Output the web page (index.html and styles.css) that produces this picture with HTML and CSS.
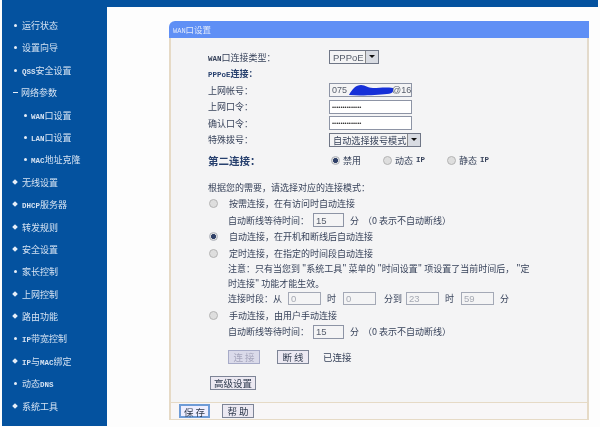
FILE: index.html
```html
<!DOCTYPE html>
<html lang="zh">
<head>
<meta charset="utf-8">
<title>WAN口设置</title>
<link rel="stylesheet" href="styles.css">
</head>
<body>
<div class="page">
  <div class="topbar"></div>
  <div class="columns">
    <nav class="sidebar">
      <div class="item dot">运行状态</div>
      <div class="item dot">设置向导</div>
      <div class="item dot"><span class="lat">QSS</span>安全设置</div>
      <div class="item dash">网络参数</div>
      <div class="item sub dot"><span class="lat">WAN</span>口设置</div>
      <div class="item sub dot"><span class="lat">LAN</span>口设置</div>
      <div class="item sub dot"><span class="lat">MAC</span>地址克隆</div>
      <div class="item plus">无线设置</div>
      <div class="item plus"><span class="lat">DHCP</span>服务器</div>
      <div class="item plus">转发规则</div>
      <div class="item plus">安全设置</div>
      <div class="item dot">家长控制</div>
      <div class="item plus">上网控制</div>
      <div class="item plus">路由功能</div>
      <div class="item dot"><span class="lat">IP</span>带宽控制</div>
      <div class="item plus"><span class="lat">IP</span>与<span class="lat">MAC</span>绑定</div>
      <div class="item dot">动态<span class="lat">DNS</span></div>
      <div class="item plus">系统工具</div>
    </nav>
    <main class="main">
      <section class="panel">
        <header class="panel-head"><span class="lat">WAN</span>口设置</header>
        <div class="panel-body">
          <div class="row"><span class="label"><span class="lat">WAN</span>口连接类型：</span>
            <span class="select select-type"><span class="select-value">PPPoE</span><span class="arrow"></span></span></div>
          <div class="row"><span class="label strong-small"><span class="lat">PPPoE</span>连接：</span></div>
          <div class="row"><span class="label">上网帐号：</span>
            <span class="field-wrap"><input class="input account acct-name" value="075                  @16">
              <svg class="scribble" width="44" height="12" viewBox="0 0 44 12"><path d="M0 11C3 5 7 1 12 1c5 0 6 3 12 3 7 0 12-1 20 0 1 4-1 6-6 6-10 1-26 2-38 1z" fill="#1630d8"/></svg></span></div>
          <div class="row"><span class="label">上网口令：</span><input class="input account pw" type="password" value="11111111111111"></div>
          <div class="row"><span class="label">确认口令：</span><input class="input account pw" type="password" value="11111111111111"></div>
          <div class="row"><span class="label">特殊拨号：</span>
            <span class="select select-dial"><span class="select-value cjk">自动选择拨号模式</span><span class="arrow"></span></span></div>
          <div class="row second"><span class="label strong">第二连接：</span>
            <span class="radio-opt first"><span class="radio on"></span>禁用</span>
            <span class="radio-opt opt-b"><span class="radio"></span>动态 <span class="lat">IP</span></span>
            <span class="radio-opt opt-c"><span class="radio"></span>静态 <span class="lat">IP</span></span></div>

          <div class="row intro">根据您的需要，请选择对应的连接模式：</div>
          <div class="row mode"><span class="radio"></span>按需连接，在有访问时自动连接</div>
          <div class="row indent">自动断线等待时间：<input class="input wait" value="15"><span class="unit">分</span><span class="hint">（0 表示不自动断线）</span></div>
          <div class="row mode"><span class="radio on"></span>自动连接，在开机和断线后自动连接</div>
          <div class="row mode"><span class="radio"></span>定时连接，在指定的时间段自动连接</div>
          <div class="row indent tight">注意：只有当您到 "系统工具" 菜单的 "时间设置" 项设置了当前时间后， "定</div>
          <div class="row indent tight">时连接" 功能才能生效。</div>
          <div class="row indent period">连接时段：从<input class="input time t1" value="0"><span class="sep">时</span><input class="input time" value="0"><span class="sep sep-to">分到</span><input class="input time" value="23"><span class="sep">时</span><input class="input time" value="59"><span class="sep">分</span></div>
          <div class="row mode"><span class="radio"></span>手动连接，由用户手动连接</div>
          <div class="row indent">自动断线等待时间：<input class="input wait" value="15"><span class="unit">分</span><span class="hint">（0 表示不自动断线）</span></div>
          <div class="actions">
            <button class="btn off">连 接</button>
            <button class="btn">断 线</button>
            <span class="status">已连接</span>
          </div>
          <div class="advanced"><button class="btn wide">高级设置</button></div>
        </div>
        <footer class="panel-foot">
          <button class="btn focus">保 存</button>
          <button class="btn">帮 助</button>
        </footer>
      </section>
    </main>
  </div>
</div>
</body>
</html>
```
FILE: styles.css
```css
* { box-sizing: border-box; }
html, body { margin: 0; padding: 0; background: #fff; }
.page {
  width: 600px; height: 427px; overflow: hidden; background: #fdfdfd;
  padding-left: 2px;
  font-family: "Noto Sans CJK SC", "Liberation Sans", sans-serif;
  font-size: 9px; color: #37425a;
  filter: blur(0.4px);
}
.lat { font-family: "Liberation Mono", monospace; font-size: 7.5px; font-weight: 700; }
.topbar { width: 596px; height: 7px; background: #04529f; }
.columns { display: flex; height: 419px; }

.sidebar { width: 105px; height: 419px; background: #04529f; padding-top: 8px; color: #d5e2f2; flex: none; }
.item { height: 22.4px; line-height: 22.4px; padding-left: 20px; position: relative; white-space: nowrap; }
.item.sub { padding-left: 29px; }
.item.dash { padding-left: 19px; }
.item::before { content: ""; position: absolute; background: #e6eef8; }
.dot::before { left: 12px; top: 9px; width: 3px; height: 3px; border-radius: 50%; }
.sub.dot::before { left: 22px; }
.plus::before { left: 11px; top: 8px; width: 4px; height: 4px; transform: rotate(45deg); }
.dash::before { left: 11px; top: 10px; width: 5px; height: 1px; }

.main { flex: 1; padding: 14px 0 0 62px; }
.panel { width: 420px; height: 399px; display: flex; flex-direction: column; }
.panel-head {
  height: 17px; line-height: 17px; background: #5f8ff5; color: #dfe8fb;
  border-radius: 6px 0 0 0; padding-left: 4px; font-size: 8.5px; flex: none;
}
.panel-head .lat { font-size: 7px; font-weight: 400; }
.panel-body {
  height: 364px; flex: none; background: #f4f4f5; padding: 10.75px 0 0 37px;
  border-left: 2px solid #e6dac6; border-right: 2px solid #e3dacb;
}
.panel-foot {
  flex: 1; background: #f8f6f7; display: flex; align-items: center; gap: 12px;
  padding: 0 0 0 8px;
  border: 2px solid #e6dac6; border-width: 1px 2px 1px 2px;
}

.row { height: 16.5px; display: flex; align-items: center; white-space: nowrap; }
.label { width: 121px; flex: none; }
.strong { font-size: 10.5px; font-weight: 700; color: #27406e; }
.strong-small { font-weight: 700; color: #27406e; }
.strong-small .lat { color: #27406e; }
.second { margin-top: 4px; }
.intro { margin-top: 10.5px; }

.input {
  height: 14px; padding: 0 2px; margin: 0; border: 1px solid #8d94a5; background: #fff;
  font-family: "Liberation Sans", sans-serif; font-size: 9.5px; color: #59606e; outline: none;
  border-radius: 0;
}
.account { width: 83px; }
.acct-name { font-size: 9px; padding-right: 0; }
.pw { font-size: 6px; letter-spacing: 0; color: #333; }
.field-wrap { position: relative; display: flex; }
.scribble { position: absolute; left: 20px; top: 1px; }
.field-wrap .input { background: #f4f4f5; }

.select {
  height: 14px; display: flex; align-items: center; justify-content: space-between;
  border: 1px solid #6f7686; background: #f4f4f5; color: #555c6a;
  font-family: "Liberation Sans", sans-serif; font-size: 9.5px; padding-left: 3px;
}
.select-type { width: 50px; }
.select-dial { width: 92px; }
.select-value.cjk { font-family: "Noto Sans CJK SC", sans-serif; font-size: 9.2px; color: #37425a; }
.arrow {
  width: 13px; height: 12px; background: #d8dbe2; border-left: 1px solid #888; position: relative; flex: none;
}
.arrow::after {
  content: ""; position: absolute; left: 3px; top: 4px;
  border: 3px solid transparent; border-top: 3px solid #111; border-bottom: 0;
}

.radio {
  width: 9px; height: 9px; border-radius: 50%; display: inline-block; flex: none;
  background: #dedede; border: 1px solid #b4b4b4;
}
.radio.on { background: radial-gradient(circle, #2f4068 0 2.2px, #dedede 2.8px); border-color: #aeb2ba; }
.radio-opt { display: inline-flex; align-items: center; gap: 3px; }
.radio-opt.first { margin-left: 2px; }
.opt-b { margin-left: 22px; }
.opt-c { margin-left: 22px; }

.mode { padding-left: 1px; }
.mode .radio { margin-left: 0; margin-right: 11px; }
.indent { padding-left: 20px; }
.tight { height: 14.5px; }
.wait { width: 31px; margin-left: 4px; background: #f4f4f5; }
.unit { margin-left: 6px; }
.hint { margin-left: 4px; }
.period .time { width: 33px; height: 13px; background: #f4f4f5; color: #a5a9b3; border-color: #a4a9b6; }
.t1 { margin-left: 6px; }
.sep { margin: 0 7px 0 6px; }
.sep-to { margin: 0 4px 0 8px; }

.btn {
  height: 14px; padding: 0; width: 32px; font-family: "Noto Sans CJK SC", sans-serif; font-size: 9.5px;
  line-height: 12px; color: #2f3a4e; background: #ece9f2; border: 1px solid #7d8496;
  border-radius: 0;
}
.actions { display: flex; align-items: center; gap: 16px; margin: 10px 0 0 20px; height: 14px; }
.actions .btn:nth-child(2) { margin-left: 1px; }
.btn.off { color: #a6a6bd; background: #dadaea; border-color: #a7abc8; }
.status { font-size: 9.5px; margin-left: -2px; }
.advanced { margin: 12px 0 0 2px; display: flex; }
.btn.wide { width: 46px; }
.btn.focus { border: 2px solid #6e9bd6; background: #eef; width: 31px; }
```
